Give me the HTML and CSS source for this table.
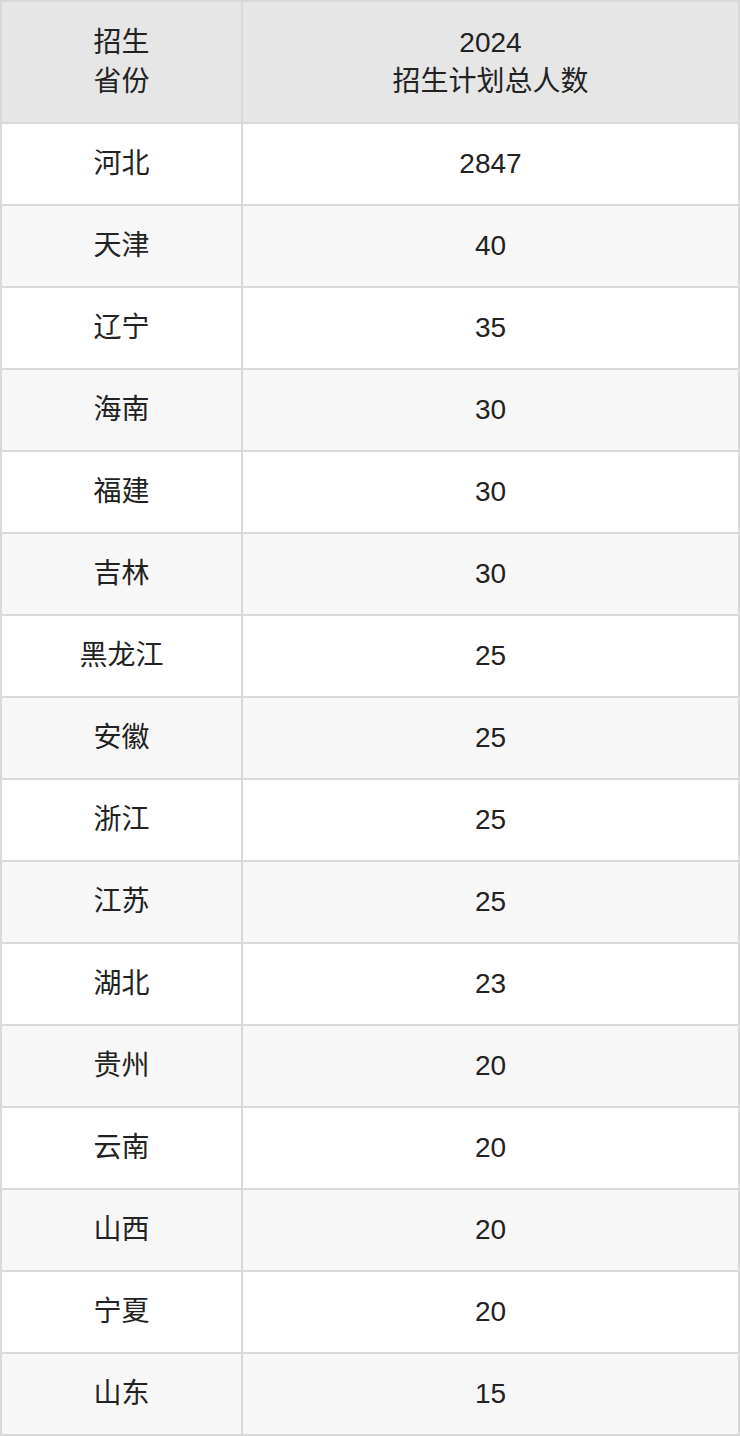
FILE: index.html
```html
<!DOCTYPE html>
<html lang="zh">
<head>
<meta charset="utf-8">
<link rel="stylesheet" href="styles.css">
</head>
<body>
<table class="plan">
  <thead>
    <tr><th class="c1">招生<br>省份</th><th class="c2">2024<br>招生计划总人数</th></tr>
  </thead>
  <tbody>
    <tr><td>河北</td><td>2847</td></tr>
    <tr><td>天津</td><td>40</td></tr>
    <tr><td>辽宁</td><td>35</td></tr>
    <tr><td>海南</td><td>30</td></tr>
    <tr><td>福建</td><td>30</td></tr>
    <tr><td>吉林</td><td>30</td></tr>
    <tr><td>黑龙江</td><td>25</td></tr>
    <tr><td>安徽</td><td>25</td></tr>
    <tr><td>浙江</td><td>25</td></tr>
    <tr><td>江苏</td><td>25</td></tr>
    <tr><td>湖北</td><td>23</td></tr>
    <tr><td>贵州</td><td>20</td></tr>
    <tr><td>云南</td><td>20</td></tr>
    <tr><td>山西</td><td>20</td></tr>
    <tr><td>宁夏</td><td>20</td></tr>
    <tr><td>山东</td><td>15</td></tr>
  </tbody>
</table>
</body>
</html>
```

FILE: styles.css
```css
html, body {
  margin: 0;
  padding: 0;
  background: #ffffff;
}
.plan {
  width: 740px;
  border-collapse: separate;
  border-spacing: 0;
  border-top: 2px solid #d9d9d9;
  border-left: 2px solid #d9d9d9;
  table-layout: fixed;
  font-family: "Liberation Sans", "Noto Sans CJK SC", sans-serif;
  font-size: 28px;
  color: #222222;
}
.plan th, .plan td {
  border-right: 2px solid #d9d9d9;
  border-bottom: 2px solid #d9d9d9;
  padding: 0;
  text-align: center;
  vertical-align: middle;
  font-weight: normal;
}
.plan th {
  height: 120px;
  line-height: 39px;
  background: #e6e6e6;
}
.plan .c1 {
  width: 239px;
}
.plan td {
  height: 80px;
  line-height: 32px;
}
.plan tbody tr:nth-child(even) td {
  background: #f7f7f7;
}
```
